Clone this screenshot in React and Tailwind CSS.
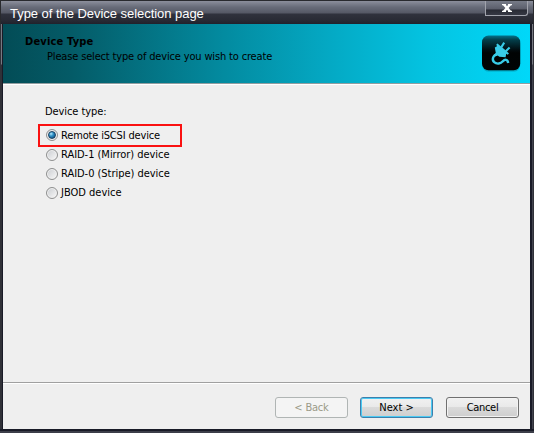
import React from "react";

const options = [
  { label: "Remote iSCSI device", spacing: "tracking-[-0.16px]", selected: true },
  { label: "RAID-1 (Mirror) device", spacing: "tracking-[-0.03px]" },
  { label: "RAID-0 (Stripe) device", spacing: "tracking-[-0.03px]" },
  { label: "JBOD device", spacing: "tracking-[0px]" },
];

function Radio({ selected }) {
  return (
    <span className="flex size-3 shrink-0 items-center justify-center rounded-full border border-[#8e8f8f] bg-linear-to-br from-[#c9ccd0] to-[#fafafa] shadow-[inset_0_0_0_1px_#f1f1f1]">
      {selected && (
        <span className="size-2 shrink-0 rounded-full border border-[#174063] bg-[radial-gradient(circle_at_35%_30%,#b4e8fb_0%,#2d8fc5_40%,#0b3f6c_100%)]" />
      )}
    </span>
  );
}

function PlugIcon() {
  return (
    <svg width="40" height="38" viewBox="0 0 40 38">
      <defs>
        <linearGradient id="tile" x1="0" y1="0" x2="0" y2="1">
          <stop offset="0" stopColor="#04728a" />
          <stop offset="0.12" stopColor="#033f4b" />
          <stop offset="0.42" stopColor="#010b0e" />
          <stop offset="0.5" stopColor="#000303" />
          <stop offset="1" stopColor="#000404" />
        </linearGradient>
      </defs>
      <rect x="1.2" y="2" width="38" height="34.6" rx="6.5" fill="#0388a0" opacity="0.6" />
      <rect x="1" y="0.6" width="38.2" height="34.6" rx="6.5" fill="url(#tile)" />
      <g stroke="#38cce8" fill="none">
        <path d="M20.2 12.4 L23.2 7.6 M24.8 16.2 L28.6 12.4" strokeWidth="2.1" />
        <path d="M16 19.4 C11.6 20.2 10.8 25 13.2 27.2 C16 29.6 19.8 28.6 21.8 26.3 C24 24 26.7 24.2 27.2 28" strokeWidth="2.4" />
      </g>
      <path d="M16.6 8.4 L18.2 10 L25.8 16.2 L28 18.4 L26.6 19.8 L25.2 18.8 L24.6 22.2 L18.4 21.7 L16.6 20.6 L14.2 21.6 L12.6 20 L14.8 18 L13.8 12.6 L16 11.2 L15.3 9.6 Z" fill="#38cce8" />
    </svg>
  );
}

export default function App() {
  return (
    <div className="flex h-[433px] w-[534px] flex-col overflow-hidden bg-[#191b27] font-['DejaVu_Sans_Condensed','DejaVu_Sans',sans-serif] text-[11px] leading-[13px] text-black">
      <header className="flex h-6 shrink-0 items-start justify-between border-x border-t border-[#292a2e] bg-[linear-gradient(to_bottom,#8c8f9c_0px,#686c79_6px,#555865_12px,#30323d_13px,#292b35_19px,#20222c_23px)] pl-[9px]">
        <h1 className="mt-[5px] whitespace-nowrap font-['Liberation_Sans',sans-serif] text-[13px] leading-4 tracking-[-0.04px] text-white">
          Type of the Device selection page
        </h1>
        <button className="mr-[5px] flex h-[15px] w-[43px] items-center justify-center rounded-br-[3px] border border-t-0 border-[#a1a3ac] bg-[linear-gradient(to_bottom,#777b88_0%,#5c5f6c_55%,#292b35_65%,#363844_100%)]" aria-label="Close">
          <svg width="12" height="10" viewBox="0 0 12 10">
            <path d="M1 1H5V2L6 3.2L7 2V1H11V2.3H10L7.6 5L10 7.7H11V9H7V8L6 6.8L5 8V9H1V7.7H2L4.4 5L2 2.3H1Z" fill="#fff" />
          </svg>
        </button>
      </header>
      <div className="flex h-[405px] shrink-0">
        <div className="w-px bg-[#303138]" />
        <div className="w-px bg-[linear-gradient(to_bottom,#777982_40px,#303138_41px)]" />
        <div className="w-px bg-[#191b27]" />
        <main className="flex w-[527px] flex-col bg-[#efefef]">
          <section className="flex h-[61px] shrink-0 justify-between border-b border-white bg-[linear-gradient(to_right,#034c56_0%,#045b67_13%,#038ba0_42%,#04a9c4_62%,#04c4e2_81%,#00d8f9_100%)] shadow-[inset_0_-1px_#929da0]">
            <div className="pt-[11px] pl-[22px]">
              <h2 className="whitespace-nowrap font-bold tracking-[0.18px]">Device Type</h2>
              <p className="mt-[2px] ml-[22px] whitespace-nowrap tracking-[-0.16px]">Please select type of device you wish to create</p>
            </div>
            <div className="mt-[11px] mr-[9px]"><PlugIcon /></div>
          </section>
          <section className="h-[297px] shrink-0 pt-[20px] pl-[42px]">
            <p className="tracking-[-0.08px]">Device type:</p>
            <div className="mt-[6px] -ml-[8px] flex w-[147px] flex-col">
              {options.map((o) => (
                <label key={o.label} className={o.selected ? "-mb-[2px] ml-px flex h-[23px] w-[144px] items-center gap-[3px] border-2 border-[#fa1111] pb-px pl-[6px]" : "flex h-[19px] items-center gap-[3px] pl-[9px]"}>
                  <Radio selected={o.selected} />
                  <span className={`whitespace-nowrap ${o.spacing}`}>{o.label}</span>
                </label>
              ))}
            </div>
          </section>
          <footer className="flex flex-1 border-t border-[#a0a0a0] pt-[14px] pl-[272px] shadow-[inset_0_1px_white]">
            <button className="mr-3 h-[21px] w-[73px] rounded-[3px] border border-[#b0b5b4] bg-[#f4f4f4] tracking-[-0.2px] text-[#9b9b88]">&lt; Back</button>
            <button className="mr-[13px] h-[21px] w-[73px] rounded-[3px] border border-[#3d7fac] bg-[linear-gradient(to_bottom,#f1f1f1_0%,#e9e9e9_48%,#dadada_50%,#cecece_100%)] shadow-[inset_0_0_0_1px_#4bcaf3]">Next &gt;</button>
            <button className="h-[21px] w-[73px] rounded-[3px] border border-[#707070] bg-[linear-gradient(to_bottom,#f1f1f1_0%,#e9e9e9_48%,#dadada_50%,#cecece_100%)] tracking-[-0.3px] shadow-[inset_0_0_0_1px_#f3f3f3]">Cancel</button>
          </footer>
        </main>
        <div className="w-[2px] bg-[#191b27]" />
        <div className="w-px bg-[linear-gradient(to_bottom,#777982_40px,#41434e_41px)]" />
        <div className="w-px bg-[#303138]" />
      </div>
      <div className="h-1 shrink-0 bg-[linear-gradient(to_bottom,#191b27_50%,#3c3e49_50%)]" />
    </div>
  );
}
